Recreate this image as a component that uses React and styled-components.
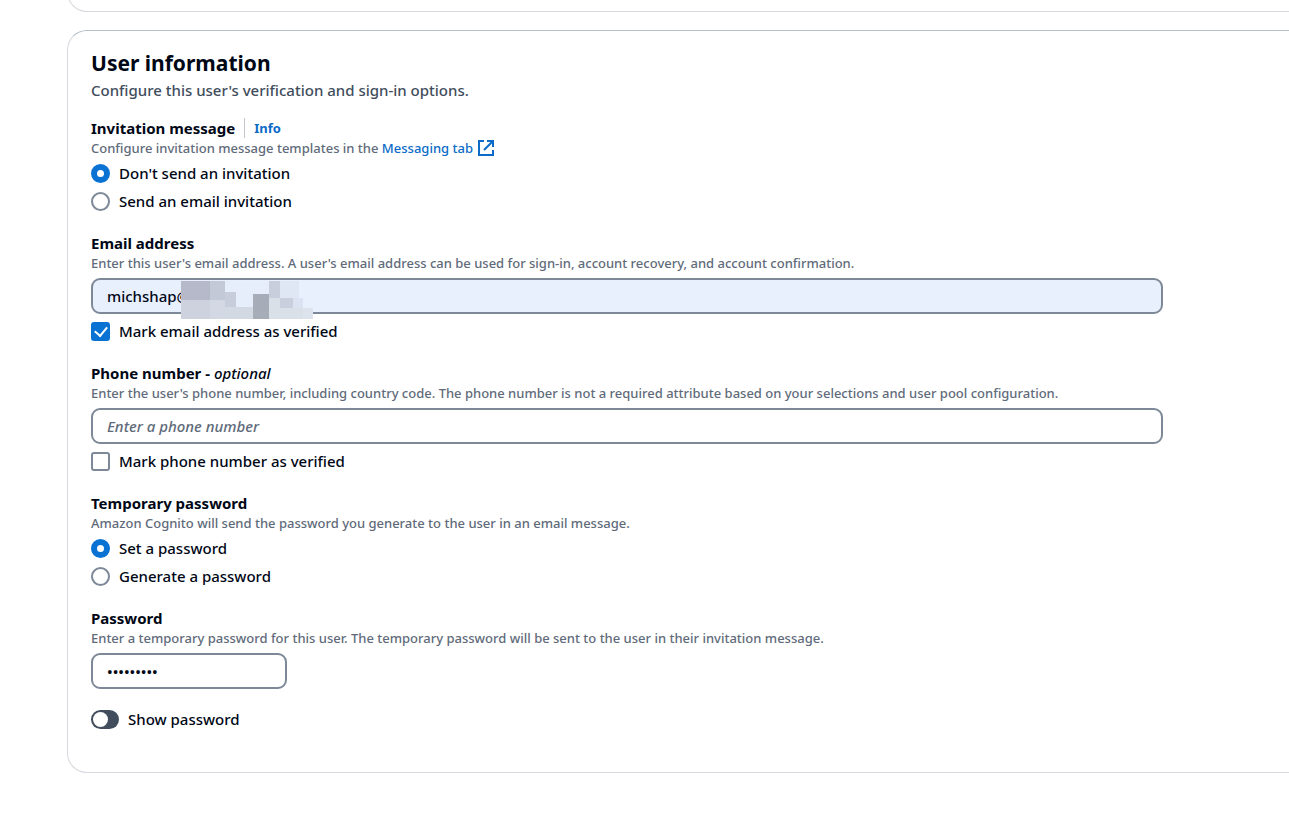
import React, { useState } from "react";
import styled, { createGlobalStyle } from "styled-components";

const App = () => {
    const [invite, setInvite] = useState("none");
    const [passwordMode, setPasswordMode] = useState("set");
    const [email, setEmail] = useState("michshap@");
    const [phone, setPhone] = useState("");
    const [password, setPassword] = useState("password1");
    const [show, setShow] = useState(false);

    return (
        <Page>
            <GlobalStyle />
            <PreviousCard />
            <Card>
                <Title>User information</Title>
                <Description>Configure this user's verification and sign-in options.</Description>
                <Form>
                    <Group role="radiogroup" aria-labelledby="invite-label">
                        <LabelRow>
                            <Label as="span" id="invite-label">Invitation message</Label>
                            <InfoLink href="#info">Info</InfoLink>
                        </LabelRow>
                        <Hint>
                            Configure invitation message templates in the{" "}
                            <Link href="#messaging">Messaging tab<ExternalIcon /></Link>
                        </Hint>
                        <Options>
                            <Choice>
                                <Radio name="invite" checked={invite === "none"} onChange={() => setInvite("none")} />
                                Don't send an invitation
                            </Choice>
                            <Choice>
                                <Radio name="invite" checked={invite === "email"} onChange={() => setInvite("email")} />
                                Send an email invitation
                            </Choice>
                        </Options>
                    </Group>
                    <Group>
                        <Label htmlFor="email">Email address</Label>
                        <Hint>Enter this user's email address. A user's email address can be used for sign-in, account recovery, and account confirmation.</Hint>
                        <Field>
                            <Input id="email" $filled value={email} onChange={(e) => setEmail(e.target.value)} />
                            <Mosaic />
                        </Field>
                        <Choice>
                            <Checkbox defaultChecked />
                            Mark email address as verified
                        </Choice>
                    </Group>
                    <Group>
                        <Label htmlFor="phone">Phone number - <em>optional</em></Label>
                        <Hint>Enter the user's phone number, including country code. The phone number is not a required attribute based on your selections and user pool configuration.</Hint>
                        <Field>
                            <Input id="phone" type="tel" placeholder="Enter a phone number" value={phone} onChange={(e) => setPhone(e.target.value)} />
                        </Field>
                        <Choice>
                            <Checkbox />
                            Mark phone number as verified
                        </Choice>
                    </Group>
                    <Group role="radiogroup" aria-labelledby="temporary-label">
                        <Label as="span" id="temporary-label">Temporary password</Label>
                        <Hint>Amazon Cognito will send the password you generate to the user in an email message.</Hint>
                        <Options>
                            <Choice>
                                <Radio name="mode" checked={passwordMode === "set"} onChange={() => setPasswordMode("set")} />
                                Set a password
                            </Choice>
                            <Choice>
                                <Radio name="mode" checked={passwordMode === "generate"} onChange={() => setPasswordMode("generate")} />
                                Generate a password
                            </Choice>
                        </Options>
                    </Group>
                    <Group>
                        <Label htmlFor="password">Password</Label>
                        <Hint>Enter a temporary password for this user. The temporary password will be sent to the user in their invitation message.</Hint>
                        <Field $narrow>
                            <Input id="password" type={show ? "text" : "password"} value={password} onChange={(e) => setPassword(e.target.value)} />
                        </Field>
                    </Group>
                </Form>
                <ToggleRow>
                    <Toggle checked={show} onChange={(e) => setShow(e.target.checked)} />
                    Show password
                </ToggleRow>
            </Card>
        </Page>
    )
}

const ExternalIcon = () => (
    <Icon viewBox="0 0 18 18" aria-hidden="true">
        <path d="M7 2H2v14h14v-5M10 2h6v6M16 2L7 11" />
    </Icon>
)

// pixelated cover over the private part of the address
const tiles = [
    [0, 0, 29, 19, "#b5b9c9"],
    [29, 0, 15, 19, "#c4c9d8"],
    [0, 19, 29, 19, "#cdd2de"],
    [29, 19, 15, 19, "#d3d8e4"],
    [44, 0, 28, 26, "#e6edfb"],
    [44, 11, 11, 15, "#c8cddb"],
    [44, 26, 28, 12, "#d3d9e3"],
    [72, 0, 16, 13, "#e6edfb"],
    [72, 13, 16, 25, "#a7acb9"],
    [88, 0, 11, 17, "#c9cedc"],
    [99, 0, 19, 17, "#dfe6f4"],
    [88, 17, 34, 21, "#d9e0e8"],
    [99, 17, 13, 10, "#c9cfdd"],
    [112, 17, 10, 10, "#dbe3f2"],
    [122, 27, 10, 11, "#dde3ec"],
]

const Mosaic = () => (
    <MosaicSvg viewBox="0 0 132 38" shapeRendering="crispEdges" aria-hidden="true">
        {tiles.map(([x, y, width, height, fill]) => (
            <rect key={`${x}-${y}`} x={x} y={y} width={width} height={height} fill={fill} />
        ))}
    </MosaicSvg>
)

const GlobalStyle = createGlobalStyle`
*{
    box-sizing:border-box;
}
body{
    margin:0;
    background:#fff;
    color:#000716;
    font-family:"Noto Sans","Open Sans",sans-serif;
    font-size:15px;
    font-weight:500;
    line-height:20px;
}
`
const Page = styled.main`
display:flex;
flex-direction:column;
gap:18px;
padding-left:67px;
overflow-x:hidden;
`
const PreviousCard = styled.section`
height:40px;
margin-top:-28px;
border:1px solid #d5d9de;
border-right:0;
border-radius:0 0 0 20px;
`
const Card = styled.section`
padding:18px 24px 43px 23px;
border:1px solid #d5d9de;
border-top-color:#b6bec9;
border-right:0;
border-radius:20px 0 0 20px;
`
const Title = styled.h2`
margin:0;
font-size:21px;
line-height:28px;
font-weight:700;
`
const Description = styled.p`
margin:3px 0 0;
color:#414d5c;
`
const Form = styled.div`
display:flex;
flex-direction:column;
gap:21px;
margin-top:18px;
`
const Group = styled.div`
display:flex;
flex-direction:column;
align-items:flex-start;
`
const LabelRow = styled.div`
display:flex;
align-items:center;
`
const Label = styled.label`
font-weight:700;
em{
    font-weight:500;
}
`
const Link = styled.a`
color:#0b6bc7;
text-decoration:none;
`
const InfoLink = styled(Link)`
margin-left:9px;
padding-left:9px;
border-left:1px solid #c6c6cd;
font-size:13px;
font-weight:700;
`
const Icon = styled.svg`
width:18px;
height:18px;
margin-left:4px;
vertical-align:text-bottom;
fill:none;
stroke:currentColor;
stroke-width:2;
`
const Hint = styled.p`
margin:0 0 4px;
color:#5f6b7a;
font-size:13px;
line-height:21px;
`
const Options = styled.div`
display:flex;
flex-direction:column;
gap:7px;
`
const Choice = styled.label`
display:flex;
align-items:center;
gap:9px;
line-height:21px;
`
const Radio = styled.input.attrs({ type: "radio" })`
appearance:none;
width:19px;
height:19px;
margin:0;
border:2px solid #7d8998;
border-radius:50%;
background:#fff;
&:checked{
    border:6px solid #0972d3;
}
`
const Checkbox = styled.input.attrs({ type: "checkbox" })`
appearance:none;
display:grid;
place-items:center;
width:19px;
height:19px;
margin:0;
border:2px solid #7d8998;
border-radius:3px;
&:checked{
    border-color:#0972d3;
    background:#0972d3;
}
&:checked::after{
    content:"";
    width:6px;
    height:10px;
    margin-bottom:3px;
    border:solid #fff;
    border-width:0 2px 2px 0;
    transform:rotate(40deg);
}
`
const Field = styled.div`
position:relative;
width:${({ $narrow }) => ($narrow ? "196px" : "92%")};
max-width:1072px;
& + label{
    margin-top:7px;
}
`
const Input = styled.input`
display:block;
width:100%;
height:36px;
padding:0 14px;
border:2px solid #7d8998;
border-radius:9px;
background:${({ $filled }) => ($filled ? "#e8f0fe" : "#fff")};
color:#000716;
font:inherit;
&::placeholder{
    color:#5f6b7a;
    font-style:italic;
}
`
const MosaicSvg = styled.svg`
position:absolute;
left:90px;
top:3px;
width:132px;
height:38px;
`
const ToggleRow = styled.label`
display:flex;
align-items:center;
gap:9px;
width:fit-content;
margin-top:20px;
`
const Toggle = styled.input.attrs({ type: "checkbox", role: "switch" })`
appearance:none;
display:flex;
width:28px;
height:19px;
margin:0;
padding:2px;
border-radius:10px;
background:#414d5c;
&::after{
    content:"";
    width:15px;
    height:15px;
    border-radius:50%;
    background:#fff;
}
&:checked{
    justify-content:flex-end;
    background:#0972d3;
}
`
export default App
